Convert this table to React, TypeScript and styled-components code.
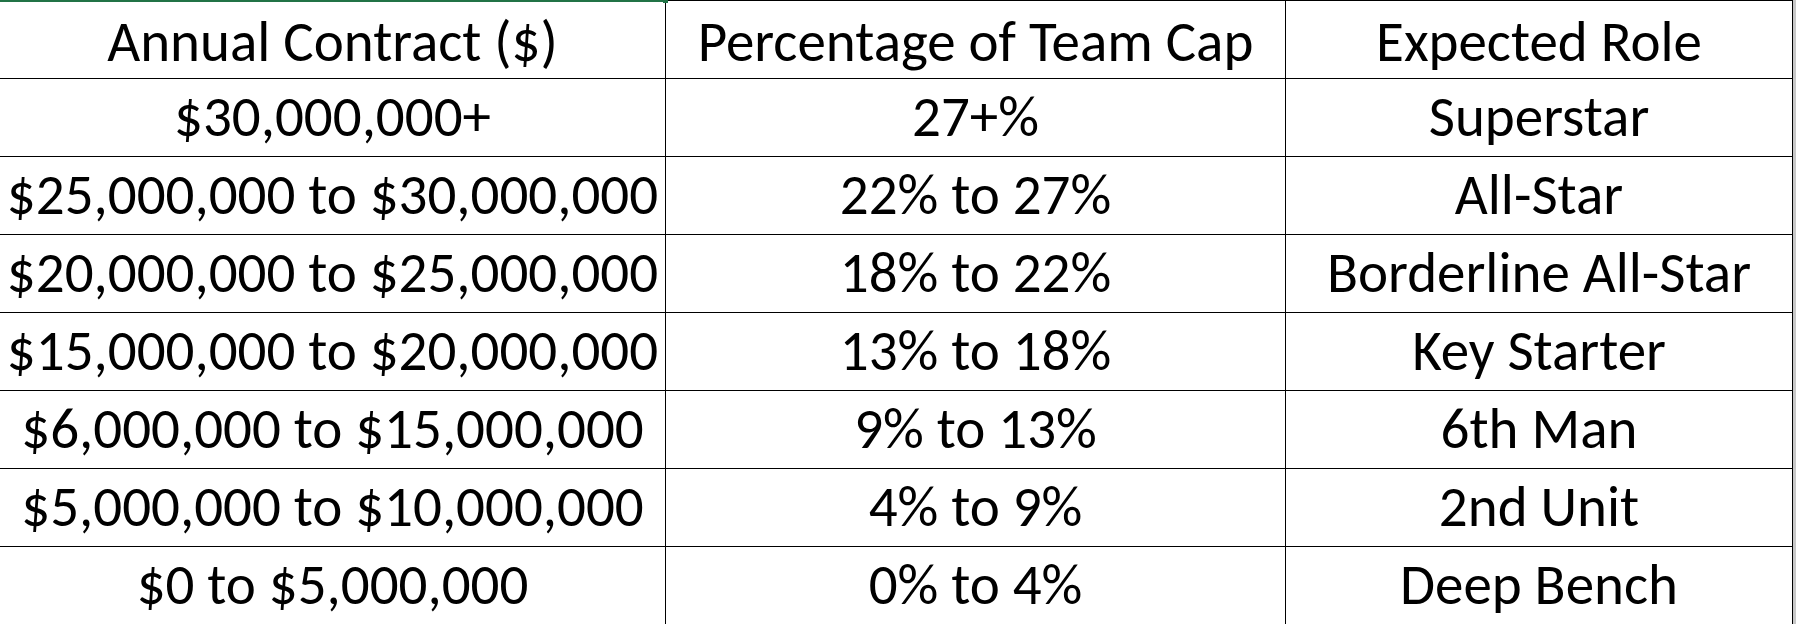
import React from "react";
import styled, { createGlobalStyle } from "styled-components";

const GlobalStyle = createGlobalStyle`
  html, body {
    margin: 0;
    padding: 0;
    background: #ffffff;
    overflow: hidden;
  }
  * {
    box-sizing: border-box;
  }
`;

const rows: Array<[string, string, string]> = [
  ["$30,000,000+", "27+%", "Superstar"],
  ["$25,000,000 to $30,000,000", "22% to 27%", "All-Star"],
  ["$20,000,000 to $25,000,000", "18% to 22%", "Borderline All-Star"],
  ["$15,000,000 to $20,000,000", "13% to 18%", "Key Starter"],
  ["$6,000,000 to $15,000,000", "9% to 13%", "6th Man"],
  ["$5,000,000 to $10,000,000", "4% to 9%", "2nd Unit"],
  ["$0 to $5,000,000", "0% to 4%", "Deep Bench"],
];

const Sheet = styled.div`
  position: relative;
  display: flex;
  width: 1796px;
  height: 624px;
  overflow: hidden;
  background: #fff;
`;

const Grid = styled.div`
  display: grid;
  grid-template-columns: 666px 620px 507px;
  grid-auto-rows: 78px;
  border-top: 1px solid #000;
  align-content: start;
`;

const ScrollEdge = styled.div`
  width: 3px;
  background: #c8c8c8;
`;

const Cell = styled.div<{ $header?: boolean }>`
  height: 78px;
  border-right: 1px solid #000;
  border-bottom: 1px solid #000;
  padding-top: ${(p) => (p.$header ? "10px" : "7px")};
  font-family: "Carlito", Lato, "Open Sans", sans-serif;
  font-size: 57px;
  line-height: 61px;
  color: #000;
  text-align: center;
  white-space: nowrap;
  overflow: hidden;
`;

const SelectionEdge = styled.div`
  position: absolute;
  top: 0;
  left: 0;
  width: 663px;
  height: 2px;
  background: #217346;
`;

const SelectionHandle = styled.div`
  position: absolute;
  top: 0;
  left: 663px;
  width: 5px;
  height: 3px;
  background: #217346;
`;

export default function App() {
  return (
    <>
      <GlobalStyle />
      <Sheet>
        <Grid>
          <Cell $header>Annual Contract ($)</Cell>
          <Cell $header>Percentage of Team Cap</Cell>
          <Cell $header>Expected Role</Cell>
          {rows.map((row, i) =>
            row.map((text, j) => <Cell key={`${i}-${j}`}>{text}</Cell>)
          )}
        </Grid>
        <ScrollEdge />
        <SelectionEdge />
        <SelectionHandle />
      </Sheet>
    </>
  );
}
